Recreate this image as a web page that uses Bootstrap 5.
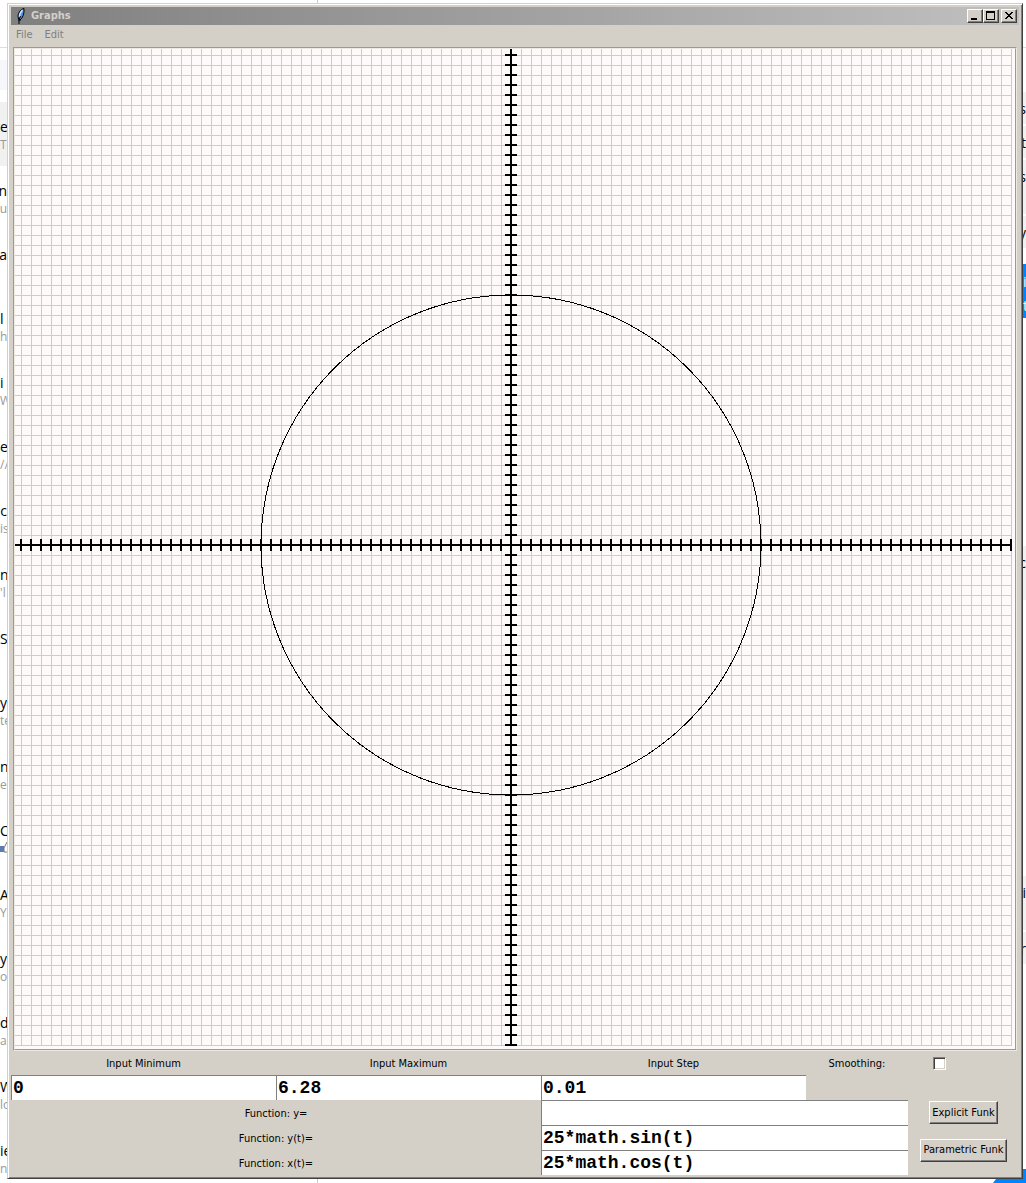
<!DOCTYPE html>
<html lang="en">
<head>
<meta charset="utf-8">
<meta name="viewport" content="width=device-width, initial-scale=1">
<title>Graphs</title>
<link href="https://cdn.jsdelivr.net/npm/bootstrap@5.3.0/dist/css/bootstrap.min.css" rel="stylesheet">
<style>
:root{--face:#d4d0c8;--shade:#808080;--deep:#404040}
body{background:#fff;font-family:"Open Sans","Noto Sans",sans-serif;color:#000}
.desk{min-height:100vh;background:linear-gradient(#ccc,#ccc) 317px 0/1px 100% no-repeat}
.side{max-height:100vh;overflow:hidden;white-space:nowrap;flex:none;background:#fff}
.side-l{width:7px}
.side-r{width:3px}
.side-top{height:48px;border-bottom:1px solid #ddd;flex:none}
.search{height:30px;margin:12px 0;background:#f5f7fb;flex:none}
.chat{height:64px;padding-top:15px;flex:none}
.chat.sel{background:#f1f1f1}
.chat div{display:flex;overflow:hidden}
.who{font-size:14px;line-height:20px}
.say{font-size:12px;line-height:16px;color:#999}
.msg{background:#f1f1f1;font-size:14px;line-height:34px;height:32px;margin-bottom:2px;flex:none;overflow:hidden;display:flex;justify-content:flex-end}
.msg.first{margin-top:44px}
.msg.tall{height:54px}
.msg.later{margin-top:274px}
.msg.mine{background:#0084ff;color:#fff;line-height:24px;margin-top:14px;margin-bottom:228px;height:54px;flex-direction:column}
.corner{height:14px;background:#0084ff}
.strip{height:4px}
.strip span{width:30px;background:#0084ff;clip-path:polygon(3px 0,100% 0,100% 100%,0 100%)}
/* application window */
.app-win{margin-top:3px;padding:3px;background:var(--face);border:1px solid;border-color:var(--face) var(--deep) var(--deep) var(--face);box-shadow:inset 1px 1px #fff,inset -1px -1px var(--shade);font-family:"DejaVu Sans Condensed","DejaVu Sans",sans-serif;font-size:11px;line-height:16px}
.bar{height:18px;background:linear-gradient(90deg,#808080,#c0c0c0);color:var(--face);padding:0 2px 0 4px}
.bar h1{font-size:11px;line-height:18px;font-weight:700;margin:0 0 0 4px}
.raised{background:var(--face);color:#000;border:1px solid;border-color:#fff var(--deep) var(--deep) #fff;box-shadow:inset -1px -1px var(--shade);padding:0;border-radius:0}
.cap{width:16px;height:14px;display:flex}
.cap-x{margin-left:2px}
.menus{height:22px;padding:0 5px;gap:12px}
.menus button{border:0;background:none;padding:0;color:#808080;line-height:20px;height:20px}
.plot{margin:0 2px;border:1px solid;border-color:#9d9995 #ece9e4 #ece9e4 #9d9995}
.plot>div{border:1px solid;border-color:#ece9e4 #9d9995 #9d9995 #ece9e4;background:#fffafa}
.plot svg{display:block;width:100%;height:auto}
.panel{display:grid;grid-template-columns:265fr 265fr 265fr 102fr 62fr 49fr;grid-template-rows:24px repeat(4,25px);align-items:center;justify-items:center}
.panel label{padding-top:2px}
.panel input[type=text]{width:100%;min-width:0;height:25px;border:0;border-top:1px solid var(--shade);border-left:1px solid var(--shade);border-radius:0;background:#fff;padding:0 1px;font:700 18px/24px "Liberation Mono",monospace;color:#000}
.fn{grid-column:3/span 2}
.act{grid-column:5/span 2}
.two-rows{grid-row:span 2}
.lbl{grid-column:1/span 2}
.push{height:23px;padding:0 2px;line-height:20px}
.tick{appearance:none;width:13px;height:13px;margin:0;background:#fff;border:1px solid;border-color:var(--shade) #fff #fff var(--shade);box-shadow:inset 1px 1px var(--deep),inset -1px -1px var(--face)}
.tick:checked{background:#000}
</style>
<script src="https://cdn.jsdelivr.net/npm/bootstrap@5.3.0/dist/js/bootstrap.bundle.min.js"></script>
</head>
<body>
<div class="desk d-flex">
  <aside class="side side-l d-flex flex-column">
    <div class="side-top"></div>
    <div class="search"></div>
    <div class="chat sel"><div class="who">e</div><div class="say">Th</div></div>
    <div class="chat"><div class="who justify-content-end">n</div><div class="say justify-content-end">Bu</div></div>
    <div class="chat"><div class="who justify-content-end">Pa</div></div>
    <div class="chat"><div class="who">l</div><div class="say">ha</div></div>
    <div class="chat"><div class="who">i .</div><div class="say">W</div></div>
    <div class="chat"><div class="who">er</div><div class="say">//</div></div>
    <div class="chat"><div class="who justify-content-end">nc</div><div class="say">is</div></div>
    <div class="chat"><div class="who">n</div><div class="say">'l</div></div>
    <div class="chat"><div class="who">S</div></div>
    <div class="chat"><div class="who">y</div><div class="say">te</div></div>
    <div class="chat"><div class="who">n</div><div class="say">er</div></div>
    <div class="chat"><div class="who">C</div><svg class="d-block" width="7" height="14" aria-hidden="true"><path d="M0 5h4v6H0z" fill="#5b7bb4"/><path d="M4 11V7l3-6M4 11h3" fill="none" stroke="#777"/></svg></div>
    <div class="chat"><div class="who">Al</div><div class="say">Yo</div></div>
    <div class="chat"><div class="who">y</div><div class="say">or</div></div>
    <div class="chat"><div class="who">d</div><div class="say">ar</div></div>
    <div class="chat"><div class="who">W</div><div class="say">lo</div></div>
    <div class="chat"><div class="who">ie</div><div class="say">nt</div></div>
  </aside>

  <div class="flex-grow-1 d-flex flex-column">
    <main class="app-win">
      <header class="bar d-flex align-items-center">
        <svg width="12" height="16" viewBox="0 0 12 16" aria-hidden="true">
          <path d="M9 .5C6 1 3.500 4 3 8l.5 3 1.500 1C7.500 10 9.500 6 9 .5z" fill="#4f94e8" stroke="#000"/>
          <path d="M7.500 2C5.500 4 4.500 7 4.500 9" fill="none" stroke="#cfe5ff" stroke-width="1.500"/>
          <path d="M5.500 8L4 12v4M3 12h3" fill="none" stroke="#000"/>
        </svg>
        <h1>Graphs</h1>
        <div class="d-flex ms-auto">
          <button class="raised cap" type="button" aria-label="Minimize"><svg width="14" height="12" shape-rendering="crispEdges"><path d="M3 8h6v2H3z"/></svg></button>
          <button class="raised cap" type="button" aria-label="Maximize"><svg width="14" height="12" shape-rendering="crispEdges"><path d="M2 1h9v9H2zM3 3v6h7V3z" fill-rule="evenodd"/></svg></button>
          <button class="raised cap cap-x" type="button" aria-label="Close"><svg width="14" height="12" shape-rendering="crispEdges"><path d="M3 2h2v1h1v1h2V3h1V2h2v1h-1v1H9v1H8v1h1v1h1v1h1v1H9V8H8V7H6v1H5v1H3V8h1V7h1V6h1V5H5V4H4V3H3z"/></svg></button>
        </div>
      </header>
      <nav class="menus d-flex align-items-start">
        <button type="button">File</button>
        <button type="button">Edit</button>
      </nav>
      <div class="plot"><div>
        <svg viewBox="0 0 1000 1000" shape-rendering="crispEdges" role="img" aria-label="Circle of radius 25">
          <defs>
            <pattern id="grid" x="6" y="6" width="10" height="10" patternUnits="userSpaceOnUse"><path d="M0 0h10v1H1v9H0z" fill="#ccc"/></pattern>
            <pattern id="tx" x="5" y="0" width="10" height="1000" patternUnits="userSpaceOnUse"><path d="M0 0h2v1000H0z"/></pattern>
            <pattern id="ty" x="0" y="5" width="1000" height="10" patternUnits="userSpaceOnUse"><path d="M0 0h1000v2H0z"/></pattern>
          </defs>
          <rect width="997" height="997" fill="url(#grid)"/>
          <rect y="490" width="997" height="12" fill="url(#tx)"/>
          <rect x="490" width="12" height="997" fill="url(#ty)"/>
          <rect y="495" width="997" height="2"/>
          <rect x="495" width="2" height="997"/>
          <circle cx="496" cy="496" r="250" fill="none" stroke="#000"/>
        </svg>
      </div></div>
      <form class="panel">
        <label for="imin">Input Minimum</label>
        <label for="imax">Input Maximum</label>
        <label for="istep">Input Step</label>
        <label for="smooth">Smoothing:</label>
        <input class="tick" id="smooth" type="checkbox">
        <span></span>
        <input id="imin" type="text" value="0">
        <input id="imax" type="text" value="6.28">
        <input id="istep" type="text" value="0.01">
        <label class="lbl" for="fy">Function: y=</label>
        <input class="fn" id="fy" type="text">
        <button class="raised push act" type="button">Explicit Funk</button>
        <label class="lbl" for="fyt">Function: y(t)=</label>
        <input class="fn" id="fyt" type="text" value="25*math.sin(t)">
        <button class="raised push act two-rows" type="button">Parametric Funk</button>
        <label class="lbl" for="fxt">Function: x(t)=</label>
        <input class="fn" id="fxt" type="text" value="25*math.cos(t)">
      </form>
    </main>
    <div class="strip d-flex justify-content-end"><span></span></div>
  </div>

  <aside class="side side-r d-flex flex-column">
    <div class="side-top"></div>
    <div class="msg first">s</div>
    <div class="msg">t</div>
    <div class="msg tall">s</div>
    <div class="msg">y</div>
    <div class="msg mine"><span>i</span><span>t</span></div>
    <div class="msg tall">c</div>
    <div class="msg tall later">i</div>
    <div class="msg">r</div>
    <div class="corner mt-auto"></div>
  </aside>
</div>
</body>
</html>
